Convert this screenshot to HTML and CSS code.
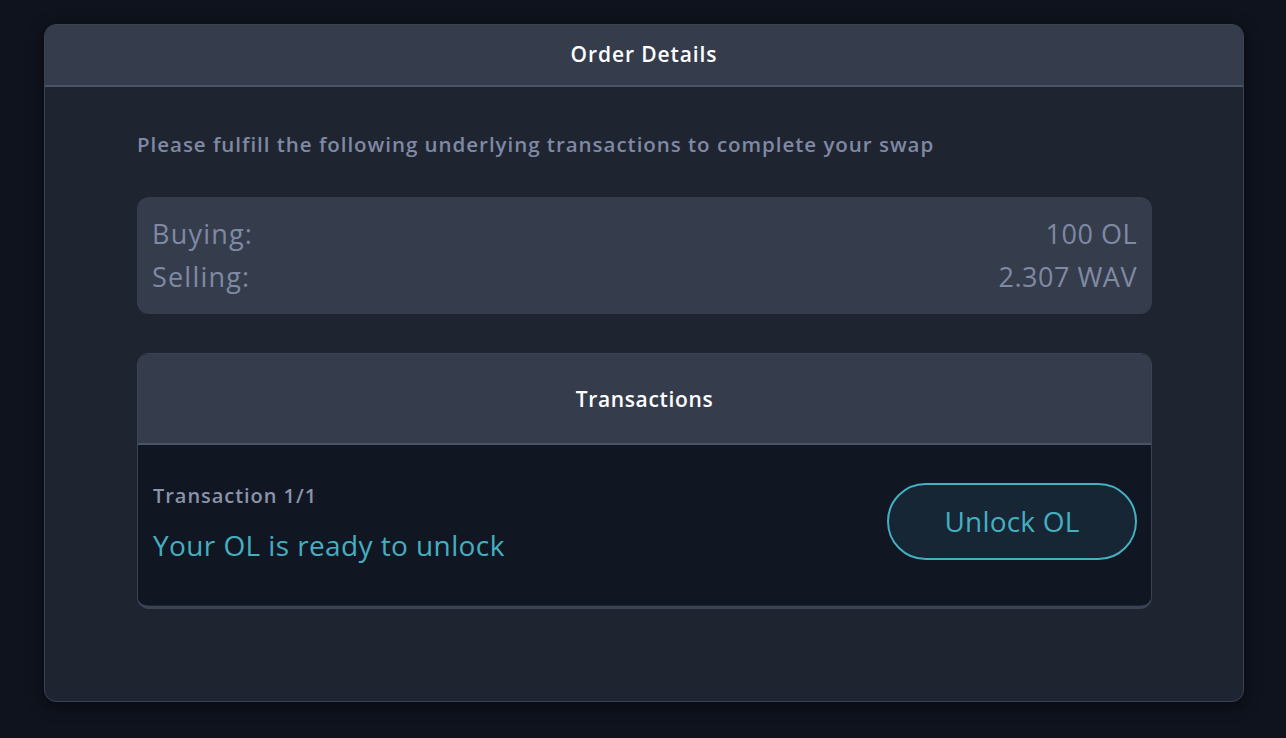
FILE: index.html
```html
<!DOCTYPE html>
<html>
<head>
<meta charset="utf-8">
<link rel="stylesheet" href="styles.css">
</head>
<body>
<div class="page">
  <div class="card">
    <div class="card-head">Order Details</div>
    <div class="card-body">
      <p class="intro">Please fulfill the following underlying transactions to complete your swap</p>
      <div class="summary">
        <div class="row"><span class="label">Buying:</span><span>100 OL</span></div>
        <div class="row"><span class="label">Selling:</span><span>2.307 WAV</span></div>
      </div>
      <div class="tx">
        <div class="tx-head">Transactions</div>
        <div class="tx-body">
          <div class="tx-info">
            <div class="tx-label">Transaction 1/1</div>
            <div class="tx-status">Your OL is ready to unlock</div>
          </div>
          <button class="unlock">Unlock OL</button>
        </div>
      </div>
    </div>
  </div>
</div>
</body>
</html>
```

FILE: styles.css
```css
* { box-sizing: border-box; }
html, body { margin: 0; padding: 0; }
body {
  background: #0f131d;
  font-family: "Open Sans", "Noto Sans", sans-serif;
  width: 1286px;
  height: 738px;
  overflow: hidden;
}
.page {
  padding: 24px 42px 0 44px;
}
.card {
  width: 1200px;
  height: 678px;
  background: #1f2431;
  border: 1px solid #3a4355;
  border-radius: 12px;
  overflow: hidden;
  box-shadow: 0 4px 16px rgba(0,0,0,0.5);
}
.card-head {
  height: 62px;
  background: #353d4d;
  border-bottom: 2px solid #4a5468;
  color: #ffffff;
  font-weight: 600;
  font-size: 21px;
  letter-spacing: 0.9px;
  display: flex;
  align-items: center;
  justify-content: center;
  padding-bottom: 2px;
}
.card-body {
  padding: 0 91px 0 92px;
}
.intro {
  margin: 0;
  padding-top: 44px;
  height: 110px;
  color: #7f89a3;
  font-size: 20.5px;
  font-weight: 600;
  letter-spacing: 0.97px;
  line-height: 27px;
}
.summary {
  background: #353d4d;
  border-radius: 12px;
  height: 117px;
  padding: 21px 15px 0 15px;
  color: #7f89a3;
  font-size: 27px;
  letter-spacing: 0.5px;
  display: flex;
  flex-direction: column;
  gap: 12px;
}
.row {
  display: flex;
  justify-content: space-between;
  line-height: 31px;
}
.label {
  letter-spacing: 1.2px;
}
.tx {
  margin-top: 39px;
  border: 1px solid #3a4355;
  border-bottom-width: 3px;
  border-radius: 12px;
  overflow: hidden;
  height: 256px;
}
.tx-head {
  height: 91px;
  background: #353d4d;
  border-bottom: 2px solid #4a5468;
  color: #ffffff;
  font-weight: 600;
  font-size: 21px;
  letter-spacing: 0.65px;
  display: flex;
  align-items: center;
  justify-content: center;
}
.tx-body {
  background: #111722;
  height: 160px;
  display: flex;
  align-items: center;
  justify-content: space-between;
  padding: 0 14px 8px 15px;
}
.tx-info {
  padding-top: 4px;
}
.tx-label {
  color: #8a93ab;
  font-size: 20px;
  font-weight: 600;
  letter-spacing: 0.95px;
  line-height: 26px;
}
.tx-status {
  margin-top: 18px;
  color: #45aec0;
  font-size: 28px;
  letter-spacing: 0.4px;
  line-height: 36px;
}
.unlock {
  width: 250px;
  height: 77px;
  border-radius: 39px;
  border: 2px solid #45aec0;
  background: #162634;
  color: #45aec0;
  font-family: inherit;
  font-size: 28px;
  letter-spacing: 0.2px;
}
```
